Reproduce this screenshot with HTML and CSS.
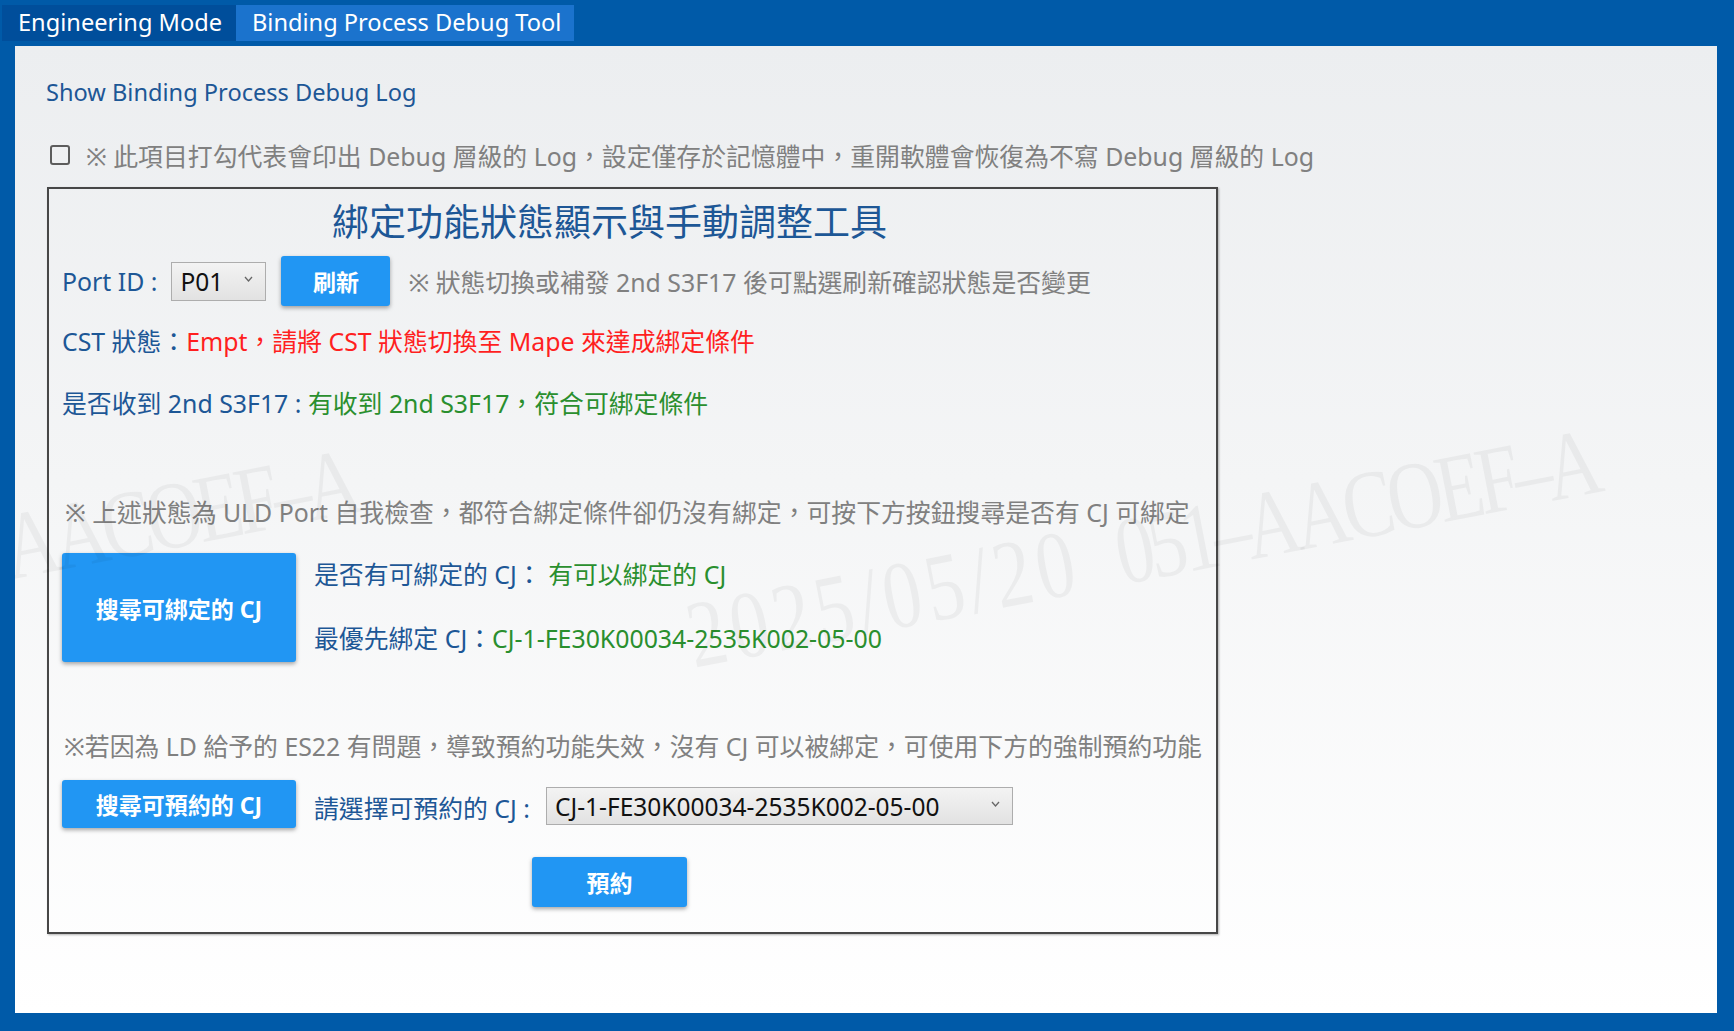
FILE: index.html
```html
<!DOCTYPE html>
<html lang="zh-Hant">
<head>
<meta charset="utf-8">
<title>Binding Process Debug Tool</title>
<link rel="stylesheet" href="styles.css">
</head>
<body>
<div class="frame">
  <nav class="tabs">
    <div class="tab">Engineering Mode</div>
    <div class="tab active">Binding Process Debug Tool</div>
  </nav>
  <main class="content">
    <h2 class="section-title">Show Binding Process Debug Log</h2>
    <label class="check-row">
      <input type="checkbox" class="check">
      <span class="note">※ 此項目打勾代表會印出 Debug 層級的 Log，設定僅存於記憶體中，重開軟體會恢復為不寫 Debug 層級的 Log</span>
    </label>

    <section class="panel">
      <h1 class="panel-title">綁定功能狀態顯示與手動調整工具</h1>

      <div class="port-row">
        <span class="label">Port ID :</span>
        <div class="select select-port">
          <span>P01</span>
          <svg class="chev" width="9" height="6" viewBox="0 0 9 6"><polyline points="1,1 4.5,5 8,1" fill="none" stroke="#666" stroke-width="1.3"/></svg>
        </div>
        <button class="btn btn-refresh">刷新</button>
        <span class="note port-note">※ 狀態切換或補發 2nd S3F17 後可點選刷新確認狀態是否變更</span>
      </div>

      <p class="status status-cst"><span class="label">CST 狀態：</span><span class="red">Empt，請將 CST 狀態切換至 Mape 來達成綁定條件</span></p>
      <p class="status status-s3f17"><span class="label">是否收到 2nd S3F17 : </span><span class="green">有收到 2nd S3F17，符合可綁定條件</span></p>

      <p class="note note-block note-search">※ 上述狀態為 ULD Port 自我檢查，都符合綁定條件卻仍沒有綁定，可按下方按鈕搜尋是否有 CJ 可綁定</p>

      <div class="search-row">
        <button class="btn btn-big">搜尋可綁定的 CJ</button>
        <div class="results">
          <p class="result"><span class="label">是否有可綁定的 CJ： </span><span class="green">有可以綁定的 CJ</span></p>
          <p class="result"><span class="label">最優先綁定 CJ：</span><span class="green">CJ-1-FE30K00034-2535K002-05-00</span></p>
        </div>
      </div>

      <p class="note note-block note-reserve">※若因為 LD 給予的 ES22 有問題，導致預約功能失效，沒有 CJ 可以被綁定，可使用下方的強制預約功能</p>

      <div class="reserve-row">
        <button class="btn btn-wide">搜尋可預約的 CJ</button>
        <span class="label reserve-label">請選擇可預約的 CJ :</span>
        <div class="select select-cj">
          <span>CJ-1-FE30K00034-2535K002-05-00</span>
          <svg class="chev" width="9" height="6" viewBox="0 0 9 6"><polyline points="1,1 4.5,5 8,1" fill="none" stroke="#666" stroke-width="1.3"/></svg>
        </div>
      </div>

      <div class="submit-row">
        <button class="btn btn-submit">預約</button>
      </div>
    </section>

    <div class="wm wm-left"><span class="wm-date">2025/05/20</span>  <span class="wm-code">051–AACOEF–A</span></div>
    <div class="wm wm-right"><span class="wm-date">2025/05/20</span>  <span class="wm-code">051–AACOEF–A</span></div>
  </main>
</div>
</body>
</html>
```

FILE: styles.css
```css
* { box-sizing: border-box; }

html, body {
  margin: 0;
  padding: 0;
}

body {
  background: #005aa8;
  font-family: "Noto Sans", "Noto Sans CJK TC", sans-serif;
  font-size: 24.85px;
}

.frame {
  width: 1734px;
  height: 1031px;
  background: #005aa8;
  display: flex;
  flex-direction: column;
  overflow: hidden;
}

/* ---------- tabs ---------- */
.tabs {
  height: 46px;
  flex: 0 0 46px;
  display: flex;
  align-items: flex-start;
  padding: 5px 0 0 2px;
}

.tab {
  height: 36px;
  line-height: 35px;
  color: #ffffff;
  font-size: 23.6px;
  background: #004e9b;
  padding-left: 16px;
  width: 234px;
  white-space: nowrap;
}

.tab.active {
  background: #1b73cd;
  padding-left: 16px;
  width: 338px;
}

/* ---------- content ---------- */
.content {
  flex: 1;
  margin: 0 17px 18px 15px;
  background: linear-gradient(180deg, #eceef0 0%, #f4f5f6 45%, #ffffff 100%);
  position: relative;
  overflow: hidden;
  padding: 30px 0 0 31px;
}

.section-title {
  margin: 0;
  font-size: 23.6px;
  font-weight: normal;
  color: #1d5796;
  line-height: 32px;
}

.check-row {
  display: flex;
  align-items: center;
  gap: 16px;
  margin-top: 31px;
  height: 32px;
  padding-left: 4px;
}

.check {
  appearance: none;
  -webkit-appearance: none;
  width: 20px;
  height: 20px;
  margin: 0;
  border: 2px solid #5c5c5c;
  border-radius: 3px;
  background: transparent;
}

.note {
  color: #808080;
  white-space: nowrap;
}

/* ---------- panel ---------- */
.panel {
  position: relative;
  z-index: 1;
  margin-top: 16px;
  margin-left: 1px;
  width: 1171px;
  height: 747px;
  border: 2px solid #474747;
  box-shadow: 1px 1px 2px rgba(0, 0, 0, 0.3);
  padding: 11px 59px 0 13px;
  display: flex;
  flex-direction: column;
}

.panel-title {
  margin: 0;
  text-align: center;
  font-size: 37px;
  font-weight: normal;
  color: #1d5796;
  line-height: 44px;
}

.label {
  color: #1d5796;
  white-space: nowrap;
}

.red { color: #ff1f1f; }
.green { color: #2a8f2e; }

.port-row {
  margin-top: 12px;
  height: 50px;
  display: flex;
  align-items: center;
}

.select {
  position: relative;
  height: 39px;
  border: 1px solid #adadad;
  background: linear-gradient(180deg, #f3f3f3, #e2e2e2);
  display: flex;
  align-items: center;
  padding-left: 8px;
  font-size: 24.5px;
  color: #111;
  white-space: nowrap;
}

.select .chev {
  position: absolute;
  right: 12px;
  top: 13px;
}

.select-port {
  width: 95px;
  margin-left: 14px;
}

.btn {
  background: #2196f3;
  color: #ffffff;
  border: none;
  border-radius: 3px;
  font-family: "Noto Sans", "Noto Sans CJK TC", sans-serif;
  font-weight: bold;
  font-size: 23px;
  box-shadow: 0 2px 4px rgba(0, 0, 0, 0.35);
  padding: 0;
  cursor: pointer;
}

.btn-refresh {
  width: 109px;
  height: 50px;
  margin-left: 15px;
}

.port-note {
  margin-left: 18px;
}

.status {
  margin: 0;
  line-height: 36px;
  white-space: nowrap;
}

.status-cst { margin-top: 17px; }
.status-s3f17 { margin-top: 26px; }

.note-block {
  margin: 0;
  line-height: 36px;
}

.note-search { margin-top: 73px; padding-left: 3px; }

.search-row {
  margin-top: 23px;
  display: flex;
  align-items: flex-start;
}

.btn-big {
  width: 234px;
  height: 109px;
}

.results {
  margin-left: 18px;
  padding-top: 5px;
  display: flex;
  flex-direction: column;
  gap: 32px;
}

.result {
  margin: 0;
  line-height: 32px;
  white-space: nowrap;
}

.note-reserve { margin-top: 66px; padding-left: 2px; }

.reserve-row {
  margin-top: 16px;
  display: flex;
  align-items: center;
  height: 48px;
}

.btn-wide {
  width: 234px;
  height: 48px;
}

.reserve-label {
  margin-left: 18px;
  padding-top: 6px;
}

.select-cj {
  width: 467px;
  height: 38px;
  margin-left: 16px;
  margin-top: 4px;
}

.submit-row {
  margin-top: 29px;
  display: flex;
  justify-content: center;
}

.btn-submit {
  width: 155px;
  height: 50px;
}

/* ---------- watermark ---------- */
.wm {
  position: absolute;
  z-index: 2;
  pointer-events: none;
  font-family: "Liberation Serif", serif;
  font-size: 96px;
  line-height: 1;
  white-space: pre;
  color: rgba(0, 0, 0, 0.045);
  transform-origin: 0 80px;
  transform: rotate(-11deg) scaleX(0.8);
}

.wm-date { letter-spacing: 6px; }
.wm-code { letter-spacing: -7px; }

.wm-right {
  left: 679px;
  top: 542px;
}

.wm-left {
  left: -562px;
  top: 562px;
}
```
